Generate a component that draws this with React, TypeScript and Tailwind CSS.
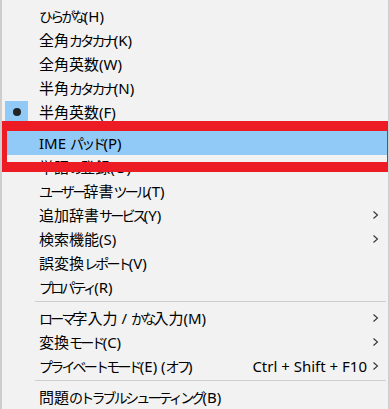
type Item =
  | { kind: "sep" }
  | { kind: "item"; label: string; checked?: boolean; active?: boolean; sub?: boolean; shortcut?: string }

const items: Item[] = [
  { kind: "item", label: "ひらがな(H)" },
  { kind: "item", label: "全角カタカナ(K)" },
  { kind: "item", label: "全角英数(W)" },
  { kind: "item", label: "半角カタカナ(N)" },
  { kind: "item", label: "半角英数(F)", checked: true },
  { kind: "sep" },
  { kind: "item", label: "IME パッド(P)", active: true },
  { kind: "item", label: "単語の登録(O)" },
  { kind: "item", label: "ユーザー辞書ツール(T)" },
  { kind: "item", label: "追加辞書サービス(Y)", sub: true },
  { kind: "item", label: "検索機能(S)", sub: true },
  { kind: "item", label: "誤変換レポート(V)" },
  { kind: "item", label: "プロパティ(R)" },
  { kind: "sep" },
  { kind: "item", label: "ローマ字入力 / かな入力(M)", sub: true },
  { kind: "item", label: "変換モード(C)", sub: true },
  { kind: "item", label: "プライベートモード(E) (オフ)", sub: true, shortcut: "Ctrl + Shift + F10" },
  { kind: "sep" },
  { kind: "item", label: "問題のトラブルシューティング(B)" },
]

// kana runs are set tighter, like the proportional kana of Yu Gothic UI
function Label({ text }: { text: string }) {
  const parts = text.split(/([\u3040-\u30ff]+)/).filter(Boolean)
  return (
    <>
      {parts.map((p, i) =>
        /[\u3040-\u30ff]/.test(p) ? (
          <span key={i} className="text-[14px] tracking-[-2.8px]">
            {p}
          </span>
        ) : (
          <span key={i}>{p}</span>
        )
      )}
    </>
  )
}

function Chevron() {
  return (
    <svg width="7" height="10" viewBox="0 0 7 10" className="shrink-0">
      <polyline points="1.5,1.5 5.5,5 1.5,8.5" fill="none" stroke="#333" strokeWidth="1.1" />
    </svg>
  )
}

export default function App() {
  return (
    <div className="relative h-[409px] w-[389px] overflow-hidden border-l-2 border-r border-[#cdcdcd] bg-[#f2f2f2] pt-1 font-['Noto_Sans','Noto_Sans_CJK_JP',sans-serif] text-[15px] text-black">
      <div className="flex flex-col">
        {items.map((it, i) =>
          it.kind === "sep" ? (
            <div key={i} className="h-[7px] pt-[2px]">
              <div className="ml-[33px] mr-[2px] h-px bg-[#cfcfcf]" />
            </div>
          ) : (
            <div
              key={i}
              className={"flex h-6 items-center pl-[3px] pr-[9px] " + (it.active ? "bg-[#91c9f7]" : "")}
            >
              <div
                className={
                  "flex h-[22px] w-[23px] shrink-0 items-center justify-center " +
                  (it.checked ? "bg-[#91c9f7]" : "")
                }
              >
                {it.checked && <div className="h-2 w-2 rounded-full bg-[#222]" />}
              </div>
              <span className="ml-[11px] flex-1 whitespace-nowrap leading-none">
                <Label text={it.label} />
              </span>
              {it.shortcut && <span className="mr-[5px] whitespace-nowrap leading-none">{it.shortcut}</span>}
              {it.sub && <Chevron />}
            </div>
          )
        )}
      </div>
      <div className="absolute left-[-2px] top-[121px] h-[51px] w-[393px] border-y-[10px] border-l-[7px] border-r-[6px] border-[#ed1c24]" />
    </div>
  )
}
